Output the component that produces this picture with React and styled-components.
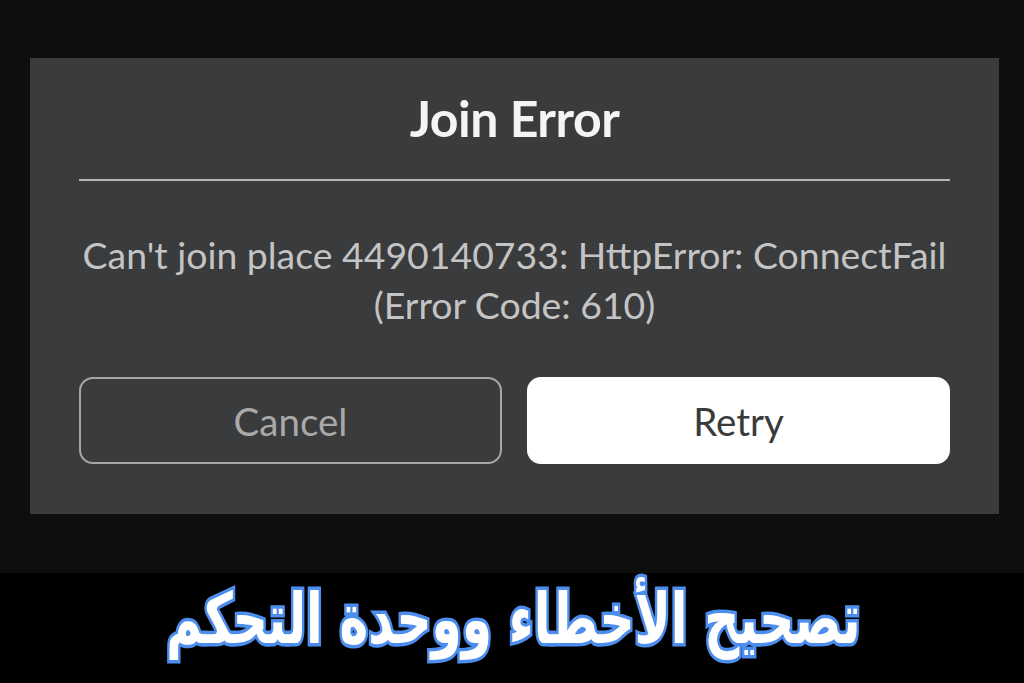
import React from "react";
import styled, { createGlobalStyle } from "styled-components";

const Global = createGlobalStyle`
  html, body { margin: 0; padding: 0; background: #000; }
  body { width: 1024px; height: 683px; overflow: hidden; font-family: "Lato", "Noto Sans", sans-serif; }
`;

const Page = styled.div`
  width: 1024px;
  height: 683px;
  display: flex;
  flex-direction: column;
`;

const Stage = styled.div`
  height: 573px;
  background: #0e0e0e;
  padding: 58px 25px 0 30px;
  box-sizing: border-box;
`;

const Dialog = styled.div`
  height: 456px;
  background: #3a3b3d;
  padding: 0 49px;
  box-sizing: border-box;
  display: flex;
  flex-direction: column;
`;

const Title = styled.h1`
  margin: 0;
  height: 123px;
  padding-bottom: 2px;
  display: flex;
  align-items: center;
  justify-content: center;
  color: #f4f4f4;
  font-family: "Lato", sans-serif;
  font-weight: 700;
  font-size: 50px;
  letter-spacing: -0.5px;
  border-bottom: 2px solid #b4b4b4;
  box-sizing: border-box;
`;

const Message = styled.p`
  margin: 0;
  padding-top: 49px;
  height: 196px;
  box-sizing: border-box;
  text-align: center;
  color: #c4c4c4;
  font-family: "Lato", sans-serif;
  font-size: 37.4px;
  line-height: 50px;
  white-space: nowrap;
`;

const Buttons = styled.div`
  display: grid;
  grid-template-columns: 1fr 1fr;
  gap: 25px;
`;

const Button = styled.button`
  height: 87px;
  border-radius: 14px;
  font-family: "Lato", sans-serif;
  font-size: 38.5px;
  cursor: pointer;
  padding: 0;
  border: 2px solid ${p => (p.$primary ? "#ffffff" : "#a6a6a6")};
  background: ${p => (p.$primary ? "#ffffff" : "transparent")};
  color: ${p => (p.$primary ? "#3a3a3a" : "#a9a9a9")};
`;

const Caption = styled.div`
  flex: 1;
  background: #000;
  display: flex;
  align-items: center;
  justify-content: center;
  padding-left: 2px;
`;

const ArabicText = styled.span`
  display: inline-block;
  direction: rtl;
  font-family: "DejaVu Sans", sans-serif;
  font-weight: 700;
  font-size: 70px;
  color: #ffffff;
  -webkit-text-stroke: 7px #4d8ded;
  paint-order: stroke fill;
  line-height: 1;
  margin-top: -18px;
  transform: scaleX(0.695);
`;

export default function App() {
  return (
    <Page>
      <Global />
      <Stage>
        <Dialog>
          <Title>Join Error</Title>
          <Message>
            Can't join place 4490140733: HttpError: ConnectFail
            <br />
            (Error Code: 610)
          </Message>
          <Buttons>
            <Button>Cancel</Button>
            <Button $primary>Retry</Button>
          </Buttons>
        </Dialog>
      </Stage>
      <Caption>
        <ArabicText>تصحيح الأخطاء ووحدة التحكم</ArabicText>
      </Caption>
    </Page>
  );
}
